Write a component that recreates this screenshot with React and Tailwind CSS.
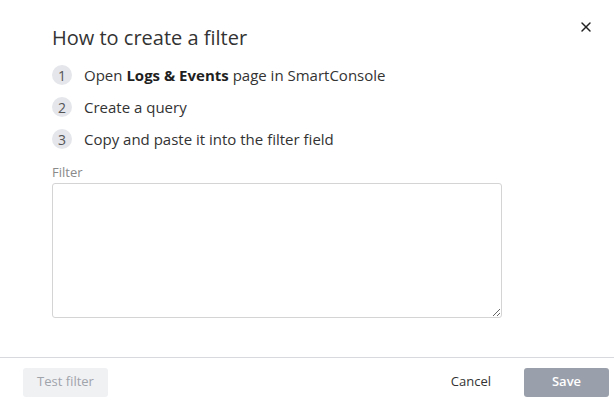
import React from 'react';
import { X } from 'lucide-react';

const steps = [
    <>Open <b className="font-bold text-[#1f1f1f]">Logs &amp; Events</b> page in SmartConsole</>,
    <>Create a query</>,
    <>Copy and paste it into the filter field</>,
];

export default function App() {
    return (
        <div className="w-[614px] h-[406px] bg-white flex flex-col text-[#333] font-['Open_Sans',sans-serif] overflow-hidden">
            {/* Body */}
            <div className="flex-1 relative pl-[52px] pr-[113px] pt-[24px]">
                <button className="absolute right-[20px] top-[19px] text-[#222]">
                    <X size={16} strokeWidth={2.2} />
                </button>

                <h2 className="text-[20px] leading-[28px] text-[#333] font-normal">How to create a filter</h2>

                <ol className="mt-[13px] flex flex-col gap-[12px]">
                    {steps.map((s, i) => (
                        <li key={i} className="flex items-center gap-[12px] h-[20px]">
                            <span className="w-[20px] h-[20px] rounded-full bg-[#e4e6eb] text-[#555] text-[14px] flex items-center justify-center">
                                {i + 1}
                            </span>
                            <span className="text-[15px] text-[#333]">{s}</span>
                        </li>
                    ))}
                </ol>

                <label className="block mt-[14px] text-[13px] leading-[18px] text-[#8a8a8a]">Filter</label>
                <textarea className="mt-[2px] block w-[450px] h-[135px] border border-[#d4d4d4] rounded-[3px] outline-none resize-y" />
            </div>

            {/* Footer */}
            <div className="h-[49px] border-t border-[#d7d9de] flex items-center justify-between pl-[23px] pr-[5px]">
                <button className="h-[29px] w-[85px] rounded-[3px] bg-[#f0f1f3] text-[#a0a4ab] text-[13px]">
                    Test filter
                </button>
                <div className="flex items-center gap-[33px]">
                    <button className="text-[13px] text-[#333]">Cancel</button>
                    <button className="h-[29px] w-[85px] rounded-[3px] bg-[#9aa0ab] text-white text-[13px] font-semibold">
                        Save
                    </button>
                </div>
            </div>
        </div>
    );
}
